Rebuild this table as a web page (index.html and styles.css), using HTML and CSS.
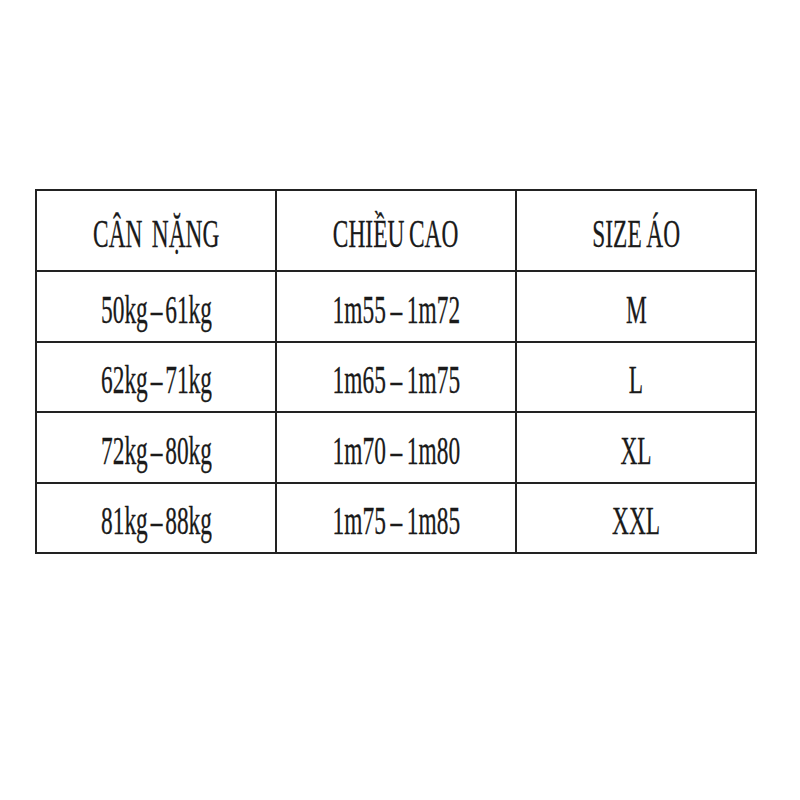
FILE: index.html
```html
<!DOCTYPE html>
<html lang="vi">
<head>
<meta charset="utf-8">
<title>Bảng size áo</title>
<link rel="stylesheet" href="styles.css">
</head>
<body>
<div class="page">
  <table class="size-table">
    <colgroup><col class="c"><col class="c"><col class="c"></colgroup>
    <tr class="head">
      <td><span class="t">CÂN &nbsp;NẶNG</span></td>
      <td><span class="t">CHIỀU CAO</span></td>
      <td><span class="t">SIZE ÁO</span></td>
    </tr>
    <tr class="r71">
      <td><span class="t kg">50kg – 61kg</span></td>
      <td><span class="t">1m55 – 1m72</span></td>
      <td><span class="t">M</span></td>
    </tr>
    <tr class="r70">
      <td><span class="t kg">62kg – 71kg</span></td>
      <td><span class="t">1m65 – 1m75</span></td>
      <td><span class="t">L</span></td>
    </tr>
    <tr class="r71">
      <td><span class="t kg">72kg – 80kg</span></td>
      <td><span class="t">1m70 – 1m80</span></td>
      <td><span class="t">XL</span></td>
    </tr>
    <tr class="r70">
      <td><span class="t kg">81kg – 88kg</span></td>
      <td><span class="t">1m75 – 1m85</span></td>
      <td><span class="t">XXL</span></td>
    </tr>
  </table>
</div>
</body>
</html>
```
FILE: styles.css
```css
html, body {
  margin: 0;
  padding: 0;
  background: #ffffff;
}
.page {
  width: 800px;
  height: 800px;
  padding: 189px 0 0 35px;
  box-sizing: border-box;
}
.size-table {
  border-collapse: collapse;
  table-layout: fixed;
  width: 722px;
  font-family: "Liberation Serif", "Times New Roman", serif;
  font-size: 39px;
  color: #1a1a1a;
}
.size-table .c {
  width: 240px;
}
.size-table td {
  border: 2px solid #222222;
  text-align: center;
  vertical-align: middle;
  padding: 5px 0 0 0;
  line-height: 45px;
  white-space: nowrap;
}
.head { height: 81px; }
.r71 { height: 71px; }
.r70 { height: 70px; }
.t {
  display: inline-block;
  transform: scaleX(0.6);
  word-spacing: -2px;
  -webkit-text-stroke: 0.3px #1a1a1a;
}
.t.kg {
  word-spacing: -5px;
}
```
